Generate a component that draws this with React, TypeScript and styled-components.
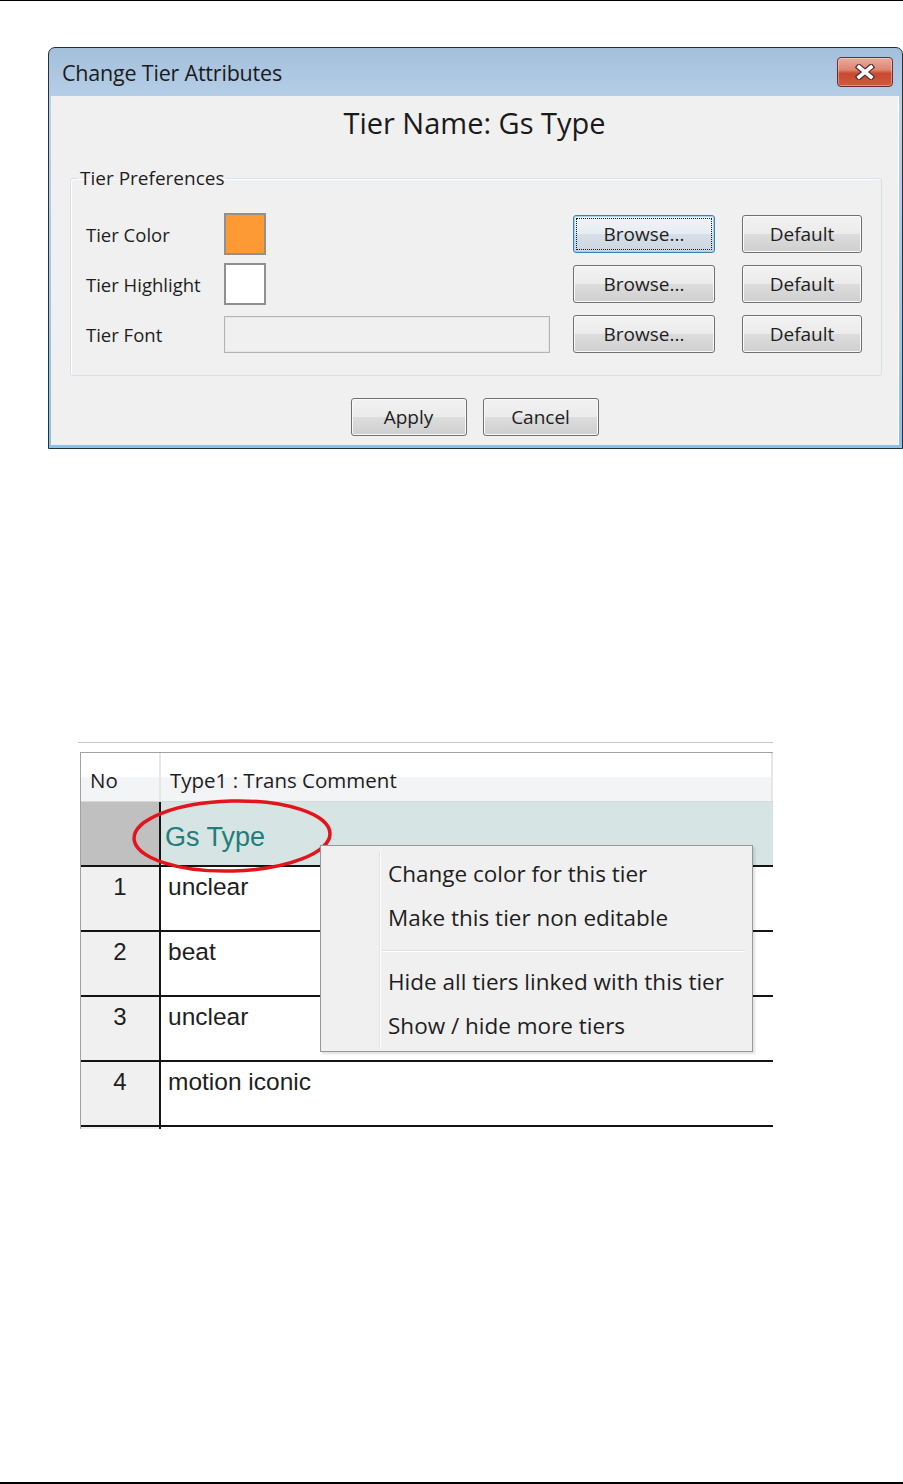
import styled, { createGlobalStyle } from "styled-components"

const GlobalStyle = createGlobalStyle`
    html, body {
        margin: 0;
        padding: 0;
        background: #ffffff;
    }
    body {
        font-family: "Open Sans", "Noto Sans", sans-serif;
        color: #1e1e1e;
    }
`

const Page = styled.div`
    width: 903px;
    height: 1484px;
    box-sizing: border-box;
    border-top: 1px solid #000;
    border-bottom: 2px solid #000;
    display: flex;
    flex-direction: column;
    align-items: flex-start;
    overflow: hidden;
`

/* ---------- dialog ---------- */

const Dialog = styled.div`
    margin: 46px 0 0 48px;
    width: 855px;
    box-sizing: border-box;
    border: 1px solid #26303a;
    border-radius: 7px 7px 0 0;
    background: linear-gradient(#a3bfdb, #bad2ea 60px, #8cc0e6);
    display: flex;
    flex-direction: column;
    overflow: hidden;
`

const TitleBar = styled.div`
    height: 48px;
    display: flex;
    align-items: center;
    justify-content: space-between;
    padding: 0 9px 0 13px;
`

const TitleText = styled.span`
    font-size: 21.5px;
    color: #1b1b1b;
    letter-spacing: -0.2px;
`

const CloseButton = styled.div`
    width: 56px;
    height: 30px;
    box-sizing: border-box;
    border: 1px solid #6b2c2c;
    border-radius: 4px;
    background: linear-gradient(#eaab9c 0%, #dd8670 42%, #c84a30 55%, #cf5a3c 100%);
    box-shadow: inset 0 0 0 1px rgba(255, 255, 255, 0.35);
    display: flex;
    align-items: center;
    justify-content: center;
`

const Body = styled.div`
    margin: 0 4px 3px 2px;
    background: #f0f0f0;
    box-shadow: 1px 0 0 #ffffff;
    display: flex;
    flex-direction: column;
    padding-bottom: 9px;
`

const Heading = styled.div`
    margin-top: 8px;
    height: 38px;
    line-height: 38px;
    text-align: center;
    font-size: 29px;
    color: #1a1a1a;
`

const GroupBox = styled.fieldset`
    margin: 25px 16px 0 19px;
    padding: 20px 18px 16px 15px;
    border: 1px solid #d5dfe5;
    border-radius: 3px;
    box-shadow: inset 1px 1px 0 #ffffff;
    min-width: 0;
`

const GroupLegend = styled.legend`
    margin-left: -8px;
    padding: 0 2px;
    font-size: 19px;
    line-height: 22px;
    color: #1e1e1e;
`

const PrefGrid = styled.div`
    display: grid;
    grid-template-columns: 138px 349px 169px 120px;
    grid-auto-rows: 50px;
    align-items: center;
`

const Label = styled.span`
    font-size: 18.5px;
    color: #1e1e1e;
`

const Swatch = styled.div<{ $color: string }>`
    width: 42px;
    height: 42px;
    box-sizing: border-box;
    border: 2px solid #909090;
    background: ${p => p.$color};
`

const FontField = styled.div`
    width: 326px;
    height: 37px;
    box-sizing: border-box;
    border: 1px solid #b4b4b4;
    box-shadow: inset 0 0 0 1px #e6e6e6;
    background: #f0f0f0;
`

const Button = styled.button<{ $width: number; $focused?: boolean }>`
    width: ${p => p.$width}px;
    height: 38px;
    padding: 0;
    box-sizing: border-box;
    border: 1px solid ${p => (p.$focused ? "#3c7fb1" : "#707070")};
    border-radius: 3px;
    background: ${p =>
        p.$focused
            ? "linear-gradient(#f1f5f8 0%, #e6ecf1 50%, #d7e0e8 50%, #cdd7e0 100%)"
            : "linear-gradient(#f2f2f2 0%, #ebebeb 50%, #dddddd 50%, #cfcfcf 100%)"};
    box-shadow: inset 0 0 0 1px ${p => (p.$focused ? "#a7d3ee" : "#fafafa")};
    outline: ${p => (p.$focused ? "1px dotted #1a1a1a" : "none")};
    outline-offset: -4px;
    font-family: "Open Sans", "Noto Sans", sans-serif;
    font-size: 19px;
    color: #1e1e1e;
    justify-self: start;
`

const ActionRow = styled.div`
    margin-top: 22px;
    display: flex;
    justify-content: center;
    gap: 16px;
`

/* ---------- table ---------- */

const TableFrame = styled.div`
    position: relative;
    margin: 293px 0 0 78px;
    width: 695px;
    height: 387px;
    box-sizing: border-box;
    border-top: 1px solid #c6c6c6;
    padding: 9px 0 0 2px;
    overflow: hidden;
`

const Table = styled.div`
    border-top: 1px solid #a2a2a2;
    border-left: 1px solid #a2a2a2;
    height: 100%;
`

const HeaderRow = styled.div`
    display: grid;
    grid-template-columns: 80px 1fr;
    height: 48px;
    border-bottom: 1px solid #d8d8d8;
    background: linear-gradient(#ffffff 0%, #ffffff 48%, #f3f4f6 52%, #f3f4f6 100%);
`

const HeaderCell = styled.div<{ $pad: number }>`
    display: flex;
    align-items: center;
    padding: 5px 0 0 ${p => p.$pad}px;
    font-size: 20.5px;
    color: #1e1e1e;
    border-right: 2px solid #e6e6e6;
`

const Row = styled.div<{ $tier?: boolean }>`
    display: grid;
    grid-template-columns: 80px 1fr;
    height: 63px;
    border-top: ${p => (p.$tier ? "none" : "2px solid #141414")};
`

const NumCell = styled.div<{ $tier?: boolean }>`
    background: ${p => (p.$tier ? "#c0c0c0" : "#f0f0f0")};
    border-right: 2px solid #141414;
    text-align: center;
    padding-top: 6px;
    font-family: "Liberation Sans", Arial, sans-serif;
    font-size: 24px;
    line-height: 28px;
    color: #1e1e1e;
`

const TextCell = styled.div`
    background: #ffffff;
    padding: 6px 0 0 7px;
    font-family: "Liberation Sans", Arial, sans-serif;
    font-size: 24.5px;
    line-height: 28px;
    color: #1e1e1e;
    white-space: nowrap;
`

const TierCell = styled.div`
    background: #d6e4e4;
    padding: 20px 0 0 4px;
    font-family: "Liberation Sans", Arial, sans-serif;
    font-size: 27px;
    line-height: 30px;
    color: #237d7b;
`

const Highlight = styled.svg`
    position: absolute;
    left: 52px;
    top: 55px;
    transform: rotate(-1.5deg);
`

/* ---------- context menu ---------- */

const Menu = styled.div`
    position: absolute;
    left: 242px;
    top: 102px;
    width: 433px;
    box-sizing: border-box;
    border: 1px solid #979797;
    background: #f0f0f0;
    padding: 6px 2px 3px 2px;
    box-shadow: 2px 2px 2px rgba(0, 0, 0, 0.12);
`

const MenuList = styled.div`
    display: flex;
    flex-direction: column;
    background: linear-gradient(
        to right,
        transparent 56px,
        #e2e3e3 56px,
        #e2e3e3 57px,
        #ffffff 57px,
        #ffffff 58px,
        transparent 58px
    );
`

const MenuItem = styled.div`
    height: 44px;
    line-height: 44px;
    padding-left: 65px;
    font-size: 22.5px;
    color: #1e1e1e;
    white-space: nowrap;
`

const MenuSeparator = styled.div`
    height: 20px;
    display: flex;
    align-items: center;
    margin: 0 5px 0 59px;

    &::after {
        content: "";
        flex: 1;
        height: 1px;
        background: #e0e0e0;
        box-shadow: 0 1px 0 #ffffff;
    }
`

const prefRows = [
    { label: "Tier Color", color: "#fd9a33", focused: true },
    { label: "Tier Highlight", color: "#ffffff" },
    { label: "Tier Font" },
]

const dataRows = ["unclear", "beat", "unclear", "motion iconic", ""]

export default function App() {
    return (
        <>
            <GlobalStyle />
            <Page>
                <Dialog>
                    <TitleBar>
                        <TitleText>Change Tier Attributes</TitleText>
                        <CloseButton>
                            <svg width="22" height="16" viewBox="0 0 22 16">
                                <path d="M5 3 L17 13 M17 3 L5 13" stroke="#4a3030" strokeWidth="6" strokeLinecap="square" fill="none" />
                                <path d="M5 3 L17 13 M17 3 L5 13" stroke="#ffffff" strokeWidth="3.6" strokeLinecap="square" fill="none" />
                            </svg>
                        </CloseButton>
                    </TitleBar>
                    <Body>
                        <Heading>Tier Name: Gs Type</Heading>
                        <GroupBox>
                            <GroupLegend>Tier Preferences</GroupLegend>
                            <PrefGrid>
                                {prefRows.map(r => [
                                    <Label key={r.label + "-l"}>{r.label}</Label>,
                                    r.color ? <Swatch key={r.label + "-s"} $color={r.color} /> : <FontField key={r.label + "-f"} />,
                                    <Button key={r.label + "-b"} $width={142} $focused={r.focused}>Browse...</Button>,
                                    <Button key={r.label + "-d"} $width={120}>Default</Button>,
                                ])}
                            </PrefGrid>
                        </GroupBox>
                        <ActionRow>
                            <Button $width={116}>Apply</Button>
                            <Button $width={116}>Cancel</Button>
                        </ActionRow>
                    </Body>
                </Dialog>

                <TableFrame>
                    <Table>
                        <HeaderRow>
                            <HeaderCell $pad={9}>No</HeaderCell>
                            <HeaderCell $pad={9}>Type1 : Trans Comment</HeaderCell>
                        </HeaderRow>
                        <Row $tier>
                            <NumCell $tier />
                            <TierCell>Gs Type</TierCell>
                        </Row>
                        {dataRows.map((text, i) => (
                            <Row key={i}>
                                <NumCell>{text ? i + 1 : ""}</NumCell>
                                <TextCell>{text}</TextCell>
                            </Row>
                        ))}
                    </Table>

                    <Highlight width="204" height="76" viewBox="0 0 204 76">
                        <ellipse cx="102" cy="38" rx="98" ry="35" fill="none" stroke="#e3151c" strokeWidth="3.5" />
                    </Highlight>

                    <Menu>
                        <MenuList>
                            <MenuItem>Change color for this tier</MenuItem>
                            <MenuItem>Make this tier non editable</MenuItem>
                            <MenuSeparator />
                            <MenuItem>Hide all tiers linked with this tier</MenuItem>
                            <MenuItem>Show / hide more tiers</MenuItem>
                        </MenuList>
                    </Menu>
                </TableFrame>
            </Page>
        </>
    )
}
